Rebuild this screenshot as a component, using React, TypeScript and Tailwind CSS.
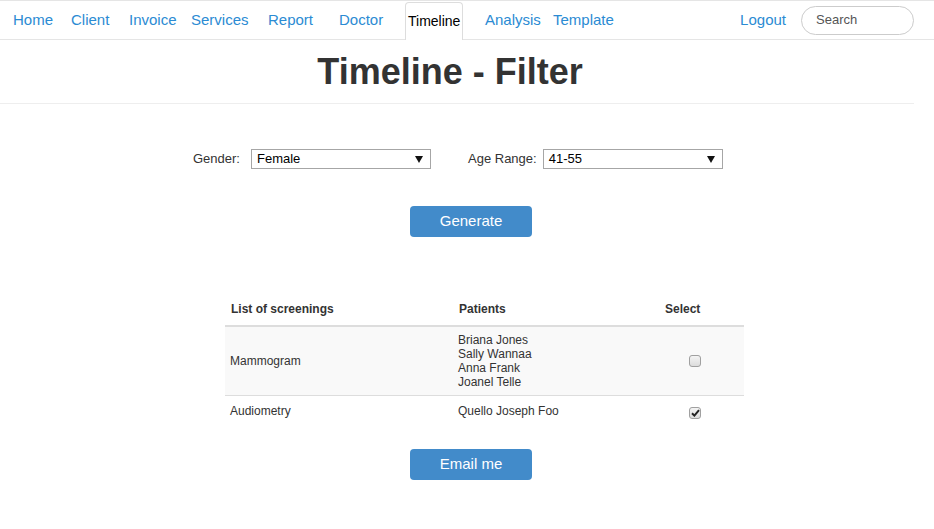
import React from "react";

const navItems: { label: string; w: string }[] = [
  { label: "Home", w: "w-[58px]" },
  { label: "Client", w: "w-[58px]" },
  { label: "Invoice", w: "w-[62px]" },
  { label: "Services", w: "w-[77px]" },
  { label: "Report", w: "w-[71px]" },
  { label: "Doctor", w: "w-[66px]" },
];

function FakeSelect({ value, width }: { value: string; width: string }) {
  return (
    <div
      className={`${width} h-[20px] border border-[#a6a6a6] bg-white flex items-center justify-between pl-[5px] pr-[7px] text-[13px] text-black`}
    >
      <span>{value}</span>
      <svg width="8" height="7" viewBox="0 0 8 7">
        <path d="M0 0 H8 L4 7 Z" fill="#111" />
      </svg>
    </div>
  );
}

function Check({ checked }: { checked?: boolean }) {
  return (
    <span className="inline-flex w-[12px] h-[12px] rounded-[3px] border border-[#a0a0a0] bg-gradient-to-b from-[#f4f4f4] to-[#dcdcdc] items-center justify-center">
      {checked && (
        <svg width="9" height="8" viewBox="0 0 9 8">
          <path
            d="M1 4.2 L3.4 6.6 L8 1.2"
            stroke="#222"
            strokeWidth="2"
            fill="none"
          />
        </svg>
      )}
    </span>
  );
}

export default function App() {
  return (
    <div
      className="w-[934px] h-[529px] bg-white text-[#333] overflow-hidden"
      style={{ fontFamily: '"Liberation Sans", Arial, sans-serif' }}
    >
      {/* Nav */}
      <div className="h-[40px] border-t border-b border-[#e5e5e5] flex items-stretch">
        <ul className="flex items-stretch pl-[13px] h-full">
          {navItems.map((n) => (
            <li
              key={n.label}
              className={`${n.w} flex items-center text-[15px] text-[#2b8bd3]`}
            >
              {n.label}
            </li>
          ))}
          <li className="w-[58px] mt-[1px] -mb-[1px] border border-b-0 border-[#dddddd] rounded-t-[4px] bg-white flex items-center pl-[2px] text-[14px] text-black">
            Timeline
          </li>
          <li className="ml-[22px] w-[68px] flex items-center text-[15px] text-[#2b8bd3]">
            Analysis
          </li>
          <li className="flex items-center text-[15px] text-[#2b8bd3]">
            Template
          </li>
        </ul>
        <div className="ml-auto flex items-center pr-[20px]">
          <span className="text-[15px] text-[#2b8bd3] mr-[15px]">Logout</span>
          <div className="w-[113px] h-[29px] rounded-full border border-[#cccccc] flex items-center pl-[14px] text-[13px] text-[#555]">
            Search
          </div>
        </div>
      </div>

      {/* Title */}
      <h1 className="w-[900px] text-center text-[36px] font-bold leading-[40px] mt-[12px] text-[#333]">
        Timeline - Filter
      </h1>
      <div className="w-[914px] mt-[11px] border-t border-[#eeeeee]" />

      {/* Filters */}
      <div className="mt-[45px] flex items-center pl-[193px] text-[13px]">
        <span className="w-[58px] text-[#333]">Gender:</span>
        <FakeSelect value="Female" width="w-[180px]" />
        <span className="ml-[37px] mr-[6px] text-[#333]">Age Range:</span>
        <FakeSelect value="41-55" width="w-[180px]" />
      </div>

      <div className="flex pl-[410px] mt-[37px]">
        <button className="w-[122px] h-[31px] rounded-[4px] bg-[#428bca] text-white text-[15px]">
          Generate
        </button>
      </div>

      {/* Table */}
      <div className="flex pl-[225px] mt-[56px]">
        <table className="w-[519px] text-[12px] text-[#333] border-collapse">
          <thead>
            <tr className="border-b-2 border-[#dddddd]">
              <th className="w-[228px] text-left font-bold pl-[6px] pt-[8px] pb-[7px] leading-[17px]">
                List of screenings
              </th>
              <th className="w-[200px] text-left font-bold pl-[6px] pt-[8px] pb-[7px] leading-[17px]">
                Patients
              </th>
              <th className="text-left font-bold pl-[12px] pt-[8px] pb-[7px] leading-[17px]">
                Select
              </th>
            </tr>
          </thead>
          <tbody>
            <tr className="bg-[#f9f9f9] border-b border-[#dddddd]">
              <td className="pl-[5px] py-[6px] align-middle">Mammogram</td>
              <td className="pl-[5px] pt-[6px] pb-[6px] leading-[14px]">
                <div>Briana Jones</div>
                <div>Sally Wannaa</div>
                <div>Anna Frank</div>
                <div>Joanel Telle</div>
              </td>
              <td className="pl-[36px] py-[6px] align-middle">
                <div className="flex">
                  <Check />
                </div>
              </td>
            </tr>
            <tr>
              <td className="pl-[5px] pt-[7px] pb-[9px] align-top leading-[17px]">
                Audiometry
              </td>
              <td className="pl-[5px] pt-[7px] pb-[9px] align-top leading-[17px]">
                Quello Joseph Foo
              </td>
              <td className="pl-[36px] pt-[11px] pb-[9px] align-top">
                <div className="flex">
                  <Check checked />
                </div>
              </td>
            </tr>
          </tbody>
        </table>
      </div>

      <div className="flex pl-[410px] mt-[20px]">
        <button className="w-[122px] h-[31px] rounded-[4px] bg-[#428bca] text-white text-[15px]">
          Email me
        </button>
      </div>
    </div>
  );
}
